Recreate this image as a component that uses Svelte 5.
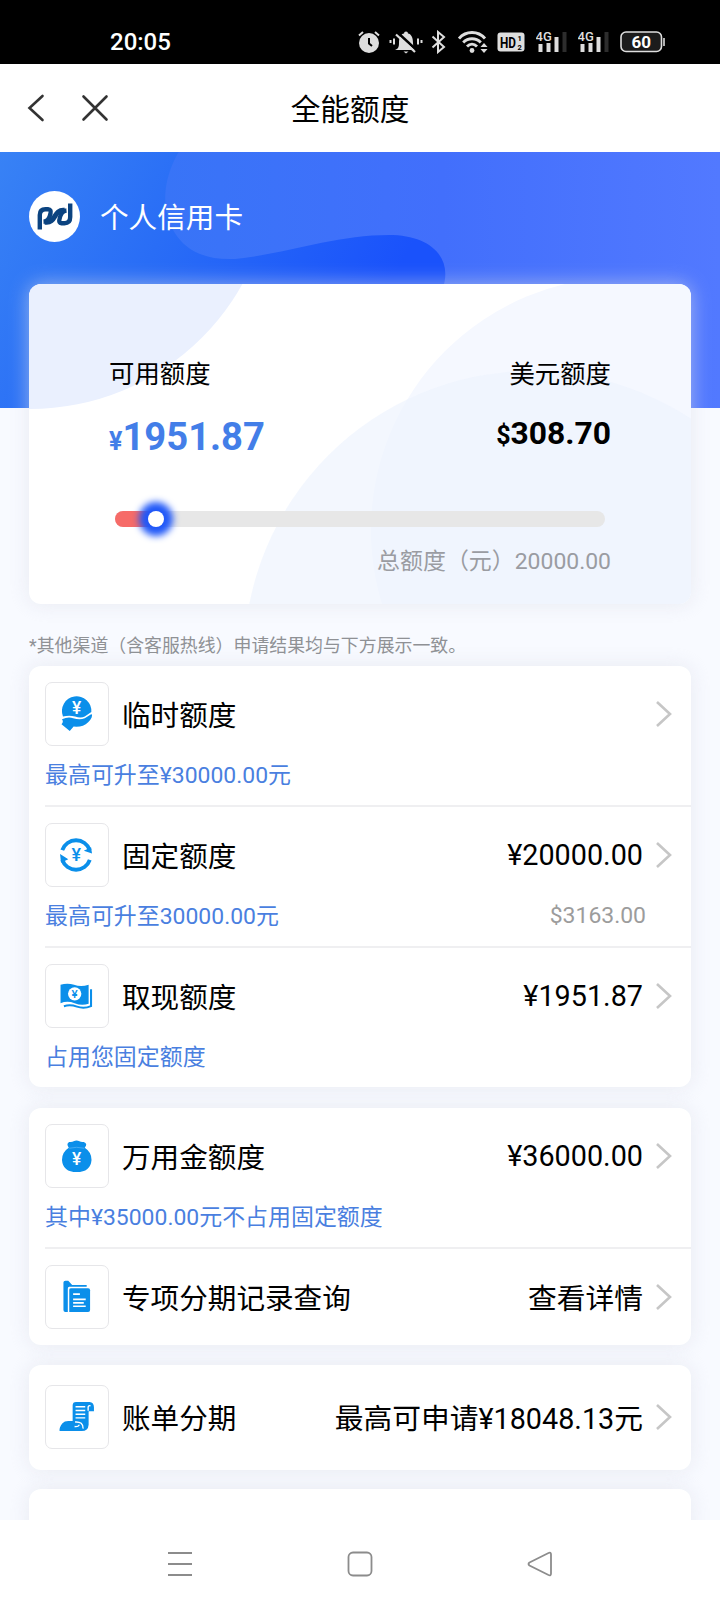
<script lang="ts">
  type Row = {
    icon: string
    title: string
    value?: string
    hint?: string
    usd?: string
  }

  const used = 8

  const groups: Row[][] = [
    [
      { icon: 'hand', title: '临时额度', hint: '最高可升至¥30000.00元' },
      { icon: 'cycle', title: '固定额度', value: '¥20000.00', hint: '最高可升至30000.00元', usd: '$3163.00' },
      { icon: 'cash', title: '取现额度', value: '¥1951.87', hint: '占用您固定额度' },
    ],
    [
      { icon: 'bag', title: '万用金额度', value: '¥36000.00', hint: '其中¥35000.00元不占用固定额度' },
      { icon: 'folder', title: '专项分期记录查询', value: '查看详情' },
    ],
    [{ icon: 'bill', title: '账单分期', value: '最高可申请¥18048.13元' }],
  ]
</script>

{#snippet signal()}
  <svg width="32" height="24" viewBox="0 0 32 24">
    <text x="-.5" y="10.5" class="tiny">4G</text>
    <path d="M2.500 14h4v8h-4zM10.500 13h4v9h-4zM18.500 7h4v15h-4z" fill="#dedede" />
    <path d="M26.500 2h4v20h-4z" fill="#2d2d2d" />
  </svg>
{/snippet}

<div class="screen">
  <div class="status">
    <span class="time">20:05</span>
    <div class="tray">
      <svg class="alarm" width="24" height="24" viewBox="0 0 24 24">
        <circle cx="12" cy="13" r="10" fill="#dedede" />
        <path d="M12 8v5.500l3 2.500" stroke="#000" stroke-width="2" fill="none" />
        <path d="M2 5.500l4-3.500M22 5.500l-4-3.500" stroke="#dedede" stroke-width="2" />
      </svg>
      <svg class="bell" width="34" height="24" viewBox="0 0 34 24">
        <path d="M6 20c3-1 4-3 4-7 0-6 2-9 5-9.500a2 2 0 0 1 4 0c3 .5 5 3.500 5 9.500 0 4 1 6 3 7zM14.500 21.500h5l-2.500 2z" fill="#dedede" />
        <path d="M8 2l20 18.500" stroke="#000" stroke-width="2.500" />
        <path d="M7 4.500L26 22" stroke="#dedede" stroke-width="2.200" />
        <path d="M1.500 10v3M5 8.500v6M29 8.500v6M32.500 10v3" stroke="#dedede" stroke-width="2" />
      </svg>
      <svg class="bluetooth" width="16" height="24" viewBox="0 0 16 24">
        <path d="M1.500 6.500L13 17l-6 5V2l6 5L1.500 17.500" fill="none" stroke="#dedede" stroke-width="2" />
      </svg>
      <svg class="wifi" width="30" height="24" viewBox="0 0 30 24">
        <g fill="none" stroke="#dedede" stroke-width="2.900">
          <path d="M1 8.500C8 .5 20 .5 27 8.500" />
          <path d="M5.200 12.500c5-5 12.600-5 17.600 0" />
          <path d="M9 16.500c3-3 7-3 10 0" />
        </g>
        <circle cx="14" cy="20.500" r="2.400" fill="#dedede" />
        <path d="M26 13l3.500 4h-7zM26 23l3.500-4h-7z" fill="#dedede" />
      </svg>
      <svg class="hd" width="28" height="20" viewBox="0 0 28 20">
        <rect x=".5" y=".5" width="27" height="19" rx="3" fill="#dedede" />
        <text x="3" y="15.500" font-size="15" font-weight="700" textLength="16" lengthAdjust="spacingAndGlyphs">HD</text>
        <text x="20.500" y="9" font-size="7.500" font-weight="700">1</text>
        <text x="20.500" y="17.800" font-size="7.500" font-weight="700">2</text>
      </svg>
      {@render signal()}
      <div class="sim2">{@render signal()}</div>
      <svg class="battery" width="46" height="22" viewBox="0 0 46 22">
        <rect x="1" y="1" width="40.500" height="19.500" rx="5" fill="#1c1c1c" stroke="#dedede" stroke-width="1.600" />
        <path d="M44 7v8" stroke="#dedede" stroke-width="1.600" />
        <text x="21.300" y="16.600" text-anchor="middle" font-size="17" font-weight="700" fill="#fff">60</text>
      </svg>
    </div>
  </div>

  <header>
    <svg width="90" height="32" viewBox="0 0 90 32" fill="none" stroke="#333" stroke-width="2.600" stroke-linecap="round">
      <path d="M15.500 4L2.500 16l13 12M56.500 4.500l23 23M79.500 4.500l-23 23" />
    </svg>
    <h1>全能额度</h1>
  </header>

  <main>
    <section class="hero">
      <svg class="backdrop" width="720" height="256" viewBox="0 0 720 256">
        <defs>
          <linearGradient id="base" x1="0" y1="0" x2="1" y2="0.200">
            <stop offset="0" stop-color="#3882f5" />
            <stop offset="0.280" stop-color="#296df6" />
            <stop offset="0.620" stop-color="#1a52fb" />
          </linearGradient>
          <linearGradient id="wave" x1="0" y1="0" x2="1" y2="0">
            <stop offset="0" stop-color="#3874f7" />
            <stop offset="0.500" stop-color="#426ffc" />
            <stop offset="1" stop-color="#5279ff" />
          </linearGradient>
        </defs>
        <rect width="720" height="256" fill="url(#base)" />
        <path
          d="M178 1C160 33 161 67 181 89C194 103 213 108 235 107C285 102 335 83 389 83C430 83 453 105 443 136L432 256H720V0H179z"
          fill="url(#wave)"
        />
      </svg>
      <div class="owner">
        <svg width="51" height="51" viewBox="0 0 51 51">
          <circle cx="25.500" cy="25.500" r="25.500" fill="#fff" />
          <g fill="none" stroke="#0b4380">
            <path d="M10.800 38.500V24Q10.800 18.300 16.500 18.300H19Q22.500 18.500 21.500 22.500Q20 30.500 14.500 30.800" stroke-width="4.400" />
            <path d="M41.200 12.500V26Q41.200 32.200 35.500 32.200H32.500Q29.500 32 30.500 28Q32 20 37.500 19.500" stroke-width="4.400" />
            <path d="M16 31.200C27.500 33 24 18 35.500 19.300" stroke-width="5" />
          </g>
        </svg>
        <span>个人信用卡</span>
      </div>
    </section>

    <section class="quota">
      <svg class="backdrop" width="662" height="320" viewBox="0 0 662 320">
        <circle cx="1" cy="-118" r="243" fill="#eaf0fe" />
        <circle cx="595" cy="246" r="253" fill="#f5f8ff" />
        <circle cx="503" cy="375" r="288" fill="#edf2fe" fill-opacity=".65" />
      </svg>
      <div class="labels">
        <span>可用额度</span>
        <span>美元额度</span>
      </div>
      <div class="amounts">
        <strong class="cny"><small>¥</small>1951.87</strong>
        <strong class="usd"><small>$</small>308.70</strong>
      </div>
      <div class="track">
        <div class="used" style="width: {used}%"><i></i></div>
      </div>
      <p class="total">总额度（元）20000.00</p>
    </section>

    <p class="note">*其他渠道（含客服热线）申请结果均与下方展示一致。</p>

    {#each groups as rows}
      <section class="group" class:single={rows.length === 1}>
        {#each rows as row}
          <div class="row">
            <div class="line">
              <svg class="icon" width="64" height="64" viewBox="0 0 64 64" fill="#0b8fea">
                {#if row.icon === 'hand'}
                  <path d="M17.500 34.500A15.200 15.200 0 1 1 46.800 30L40 34.500Q36 36.500 30 34.500Q24 33 17.500 34.500z" />
                  <path d="M16.500 37.500Q23 34.500 28 36.500Q35 38.500 40 36.500L47 32Q49 35 43.500 40.500Q38 46 28.500 45L24.500 49.500L16 42.500Q18.500 40 16.500 37.500z" />
                  <text x="31.500" y="32.500" font-size="18">¥</text>
                {:else if row.icon === 'cycle'}
                  <g fill="none" stroke="#0b8fea" stroke-width="4">
                    <path d="M16.800 27A15 15 0 0 1 45.200 27" />
                    <path d="M45.200 37A15 15 0 0 1 16.800 37" />
                  </g>
                  <path d="M39 27.500L47.500 30.500L46.500 24zM23 36.500L14.500 31L15.500 40z" />
                  <text x="31.200" y="38.500" class="blue" font-size="18.500">¥</text>
                {:else if row.icon === 'cash'}
                  <path d="M15 20.500Q22 18 29 20.500T44 20.500V40Q37 42.500 29.500 39.500T15 39.500z" />
                  <path d="M46.500 25V42.500Q39 45.500 32 43T18.500 42.500" fill="none" stroke="#0b8fea" stroke-width="2.100" />
                  <circle cx="29.600" cy="29.800" r="6.900" fill="#fff" />
                  <text x="29.600" y="34" class="blue" font-size="12">¥</text>
                {:else if row.icon === 'bag'}
                  <path d="M23.500 23.500Q20.500 19 24 17.500Q27 18 28.500 16.800Q31.500 15.200 34.500 16.800Q36.500 18 39 17.500Q43.500 19 40 23.500Q47 28 47 36Q46 48.500 31.700 48.500T16.500 36Q16.500 28 23.500 23.500z" />
                  <path d="M24 24q7.500-2 15.500 0" stroke="#55b2f2" stroke-width=".8" fill="none" />
                  <text x="31.700" y="41.500" font-size="18">¥</text>
                {:else if row.icon === 'folder'}
                  <path d="M18 17Q18 15.200 20 15.200H23L27 19.500H42V21.500H24Q22.500 21.500 22.500 23.500V47.500H20Q18 47.500 18 45.500z" />
                  <path d="M24 24.500Q24 23 26 23H43.500Q45.500 23 45.500 25V45.500Q45.500 47.500 43.500 47.500H24z" />
                  <path d="M28 29h7M28 34.500h13M28 38h11M28 41.500h13" stroke="#fff" stroke-width="1.700" />
                {:else}
                  <path d="M27.500 20Q27.500 16.500 31 16.500H45Q49.500 17 49.500 22V26H44V40Q43.500 46.500 37 46.500H14Q13.500 42.500 17 38.500Q19 36 23 36H27.500z" />
                  <path d="M43.500 25.500V21.500Q44 19.800 46 20.500" fill="none" stroke="#fff" stroke-width="1.400" />
                  <path d="M30.500 21.500h10M30.500 25.300h10M30.500 29.100h10M30.500 32.900h10" stroke="#fff" stroke-width="1.500" />
                  <path d="M30 37.200Q38.500 36.500 38.300 44M29.500 41.800Q33 42.500 34.500 40" fill="none" stroke="#fff" stroke-width="1.400" />
                {/if}
              </svg>
              <span class="title">{row.title}</span>
              {#if row.value}<span class="value" class:cjk={!row.hint}>{row.value}</span>{/if}
              <svg class="arrow" width="18" height="30" viewBox="0 0 18 30">
                <path d="M2 3l13 12L2 27" fill="none" stroke="#c6c6c6" stroke-width="2.600" />
              </svg>
            </div>
            {#if row.hint}
              <div class="hint">
                <span>{row.hint}</span>
                {#if row.usd}<span class="grey">{row.usd}</span>{/if}
              </div>
            {/if}
          </div>
        {/each}
      </section>
    {/each}

    <section class="group next"></section>
  </main>

  <nav>
    <svg width="26" height="26" viewBox="0 0 26 26"><path d="M1 2h24M1 13h24M1 24h24" /></svg>
    <svg width="26" height="26" viewBox="0 0 26 26"><rect x="1.500" y="1.500" width="23" height="23" rx="4.500" /></svg>
    <svg width="26" height="26" viewBox="0 0 26 26">
      <path d="M2.500 11.500L21.500 2Q24 1 24 3.500V22.500Q24 25 21.500 24L2.500 14.500Q.5 13 2.500 11.500z" />
    </svg>
  </nav>
</div>

<style>
  :global(body) {
    margin: 0;
  }

  .screen {
    background: #f8faff;
    color: #000;
    display: flex;
    flex-direction: column;
    font-family: Roboto, 'Noto Sans CJK SC', sans-serif;
    font-weight: 400;
    height: 1608px;
    overflow: hidden;
    width: 720px;
  }

  svg {
    display: block;
    flex: none;
  }

  p,
  h1 {
    font-weight: 400;
    margin: 0;
  }

  .status {
    align-items: center;
    background: #000;
    box-sizing: border-box;
    color: #fff;
    display: flex;
    height: 64px;
    justify-content: space-between;
    padding: 20px 54px 0 110px;
  }

  .time {
    font-size: 24px;
    font-weight: 500;
  }

  .tray {
    align-items: center;
    display: flex;
  }

  .bell {
    margin-left: 8px;
  }

  .bluetooth {
    margin-left: 8px;
  }

  .wifi {
    margin-left: 11px;
  }

  .hd {
    margin: 0 11px 0 9px;
  }

  .sim2 {
    margin: 0 10px;
  }

  .tiny {
    fill: #dedede;
    font-size: 13px;
    font-weight: 500;
  }

  header {
    align-items: center;
    background: #fff;
    display: grid;
    grid-template-columns: 90px 1fr 110px;
    height: 88px;
    padding: 0 27px;
  }

  h1 {
    font-size: 29.7px;
    line-height: 40px;
    padding-top: 4px;
    text-align: center;
  }

  main {
    flex: 1;
    min-height: 0;
    overflow: hidden;
  }

  .hero {
    height: 256px;
    position: relative;
  }

  .backdrop {
    left: 0;
    position: absolute;
    top: 0;
  }

  .owner {
    align-items: center;
    color: #fff;
    display: flex;
    font-size: 28.6px;
    gap: 20px;
    padding: 39px 29px;
    position: relative;
  }

  .owner span {
    line-height: 42px;
    padding-top: 2px;
  }

  .quota {
    background: #fff;
    border-radius: 12px;
    box-shadow: 0 0 20px rgba(222, 224, 232, 0.6);
    box-sizing: border-box;
    height: 320px;
    margin: -124px 29px 0;
    padding: 71px 80px 0;
    position: relative;
  }

  .quota .backdrop {
    border-radius: 12px;
  }

  .labels,
  .amounts,
  .track,
  .total {
    position: relative;
  }

  .labels {
    display: flex;
    font-size: 25.4px;
    justify-content: space-between;
    line-height: 38px;
  }

  .amounts {
    display: flex;
    height: 50px;
    justify-content: space-between;
    margin-top: 19px;
  }

  .cny {
    color: #437ee8;
    font-size: 38.2px;
    line-height: 51px;
  }

  .usd {
    font-size: 31.8px;
    line-height: 43px;
  }

  .cny small {
    font-size: 25px;
  }

  .usd small {
    font-size: 25px;
  }

  .track {
    background: #e7e7e7;
    border-radius: 8px;
    height: 16px;
    margin: 49px 6px 0;
  }

  .used {
    background: #f66b68;
    border-radius: 8px 0 0 8px;
    height: 16px;
    position: relative;
  }

  .used i {
    background: #fff;
    border-radius: 50%;
    box-shadow: 0 0 7px 9px #2058f8;
    height: 16px;
    position: absolute;
    right: -10px;
    top: 0;
    width: 16px;
  }

  .total {
    color: #9a9ca2;
    font-size: 22.95px;
    line-height: 34px;
    margin-top: 18px;
    text-align: right;
  }

  .note {
    color: #8f9195;
    font-size: 17.9px;
    line-height: 30px;
    margin: 27px 29px 5px;
  }

  .group {
    background: #fff;
    border-radius: 12px;
    box-shadow: 0 0 20px rgba(222, 224, 232, 0.6);
    margin: 0 29px 21px;
    padding-left: 16px;
  }

  .single {
    margin-bottom: 19px;
    margin-top: -1px;
    padding: 4px 0 5px 16px;
  }

  .next {
    height: 100px;
  }

  .row {
    padding: 16px 0;
  }

  .row:has(.hint) {
    padding-bottom: 12px;
  }

  .row + .row {
    border-top: 2px solid #efeff1;
  }

  .line {
    align-items: center;
    display: flex;
    height: 64px;
    padding-right: 18px;
  }

  .icon {
    border: 1px solid #e6e6e9;
    border-radius: 7px;
    box-sizing: border-box;
  }

  .icon text {
    fill: #fff;
    font-weight: 500;
    text-anchor: middle;
  }

  .icon .blue {
    fill: #0b8fea;
  }

  .title {
    font-size: 28.6px;
    margin-left: 13px;
    padding-bottom: 2px;
  }

  .value {
    font-size: 28.75px;
    margin-left: auto;
  }

  .cjk {
    padding-bottom: 2px;
  }

  .single + .next {
    margin-top: 0;
  }

  .arrow {
    margin-left: 12px;
  }

  .title + .arrow {
    margin-left: auto;
  }

  .hint {
    color: #4a7fe0;
    display: flex;
    font-size: 22.95px;
    justify-content: space-between;
    line-height: 34px;
    padding: 13px 45px 0 0;
  }

  .grey {
    color: #9c9c9c;
    margin-top: -1px;
  }

  nav {
    align-items: center;
    background: #fff;
    display: flex;
    gap: 154px;
    height: 88px;
    justify-content: center;
  }

  nav path,
  nav rect {
    fill: none;
    stroke: #8c8c8c;
    stroke-width: 1.8;
  }
</style>
